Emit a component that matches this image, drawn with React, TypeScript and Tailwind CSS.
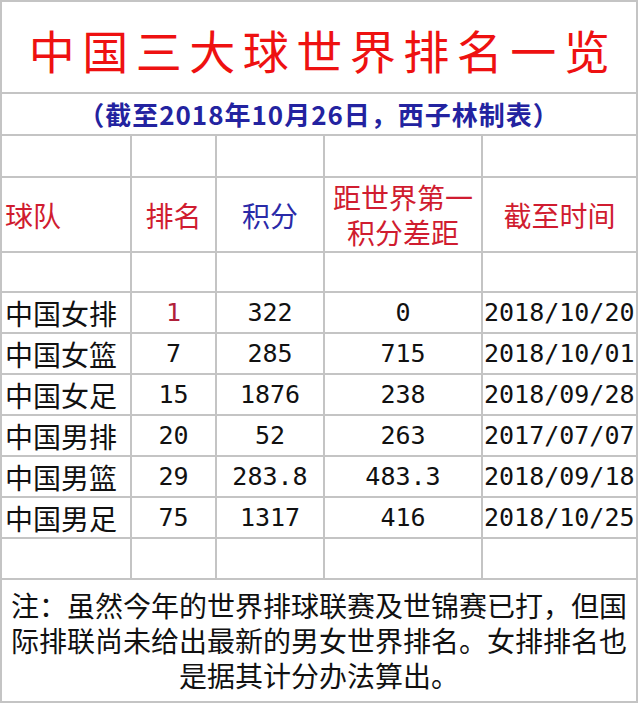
import React from "react"

const CJK = "font-['Noto_Sans_CJK_SC',sans-serif]"
const MONO = "font-['DejaVu_Sans_Mono','Noto_Sans_CJK_SC',monospace]"

const rows = [
  { team: "中国女排", rank: "1", points: "322", gap: "0", date: "2018/10/20", top: true },
  { team: "中国女篮", rank: "7", points: "285", gap: "715", date: "2018/10/01" },
  { team: "中国女足", rank: "15", points: "1876", gap: "238", date: "2018/09/28" },
  { team: "中国男排", rank: "20", points: "52", gap: "263", date: "2017/07/07" },
  { team: "中国男篮", rank: "29", points: "283.8", gap: "483.3", date: "2018/09/18" },
  { team: "中国男足", rank: "75", points: "1317", gap: "416", date: "2018/10/25" },
]

const note = [
  "注：虽然今年的世界排球联赛及世锦赛已打，但国",
  "际排联尚未给出最新的男女世界排名。女排排名也",
  "是据其计分办法算出。",
]

function Cell({ className = "", children }: { className?: string; children?: React.ReactNode }) {
  return <div className={`bg-white flex items-center ${className}`}>{children}</div>
}

function EmptyRow() {
  return (
    <>
      <Cell />
      <Cell />
      <Cell />
      <Cell />
      <Cell />
    </>
  )
}

export default function App() {
  return (
    <div className="w-[640px] h-[703px] bg-white">
      <div
        className={`w-[638px] grid grid-cols-[128px_83px_106px_156px_153px] grid-rows-[90px_40px_40px_73px_38px_repeat(7,39px)_121px] gap-[2px] p-[2px] bg-[#c4c4c4] ${CJK}`}
      >
        {/* Title */}
        <Cell className="col-span-5 justify-center pl-[8px] pt-[4px]">
          <span className="text-[46px] leading-none tracking-[7.5px] text-[#ee1111]">中国三大球世界排名一览</span>
        </Cell>

        {/* Subtitle */}
        <Cell className="col-span-5 justify-center">
          <span className="text-[26px] leading-none font-bold tracking-[1px] text-[#2323a0]">
            （截至2018年10月26日，西子林制表）
          </span>
        </Cell>

        <EmptyRow />

        {/* Header */}
        <Cell className="pl-[3px] text-[28px] text-[#d01c30]">球队</Cell>
        <Cell className="justify-center text-[28px] text-[#d01c30]">排名</Cell>
        <Cell className="justify-center text-[28px] text-[#2a2aa8]">积分</Cell>
        <Cell className="flex-col justify-center text-[28px] text-[#d01c30]">
          <div className="h-[35px] leading-[35px]">距世界第一</div>
          <div className="h-[35px] leading-[35px]">积分差距</div>
        </Cell>
        <Cell className="justify-center text-[28px] text-[#d01c30]">截至时间</Cell>

        <EmptyRow />

        {rows.map((r) => (
          <React.Fragment key={r.team}>
            <Cell className="pl-[3px] text-[28px] leading-none text-[#111]">{r.team}</Cell>
            <Cell className={`justify-center text-[25px] leading-none ${MONO} ${r.top ? "text-[#b0203a]" : "text-[#111]"}`}>
              {r.rank}
            </Cell>
            <Cell className={`justify-center text-[25px] leading-none text-[#111] ${MONO}`}>{r.points}</Cell>
            <Cell className={`justify-center text-[25px] leading-none text-[#111] ${MONO}`}>{r.gap}</Cell>
            <Cell className={`pl-[1px] text-[25px] leading-none text-[#111] ${MONO}`}>{r.date}</Cell>
          </React.Fragment>
        ))}

        <EmptyRow />

        {/* Note */}
        <Cell className="col-span-5 flex-col justify-center text-[28px] text-[#111]">
          {note.map((line) => (
            <div key={line} className="h-[35px] leading-[35px]">
              {line}
            </div>
          ))}
        </Cell>
      </div>
    </div>
  )
}
